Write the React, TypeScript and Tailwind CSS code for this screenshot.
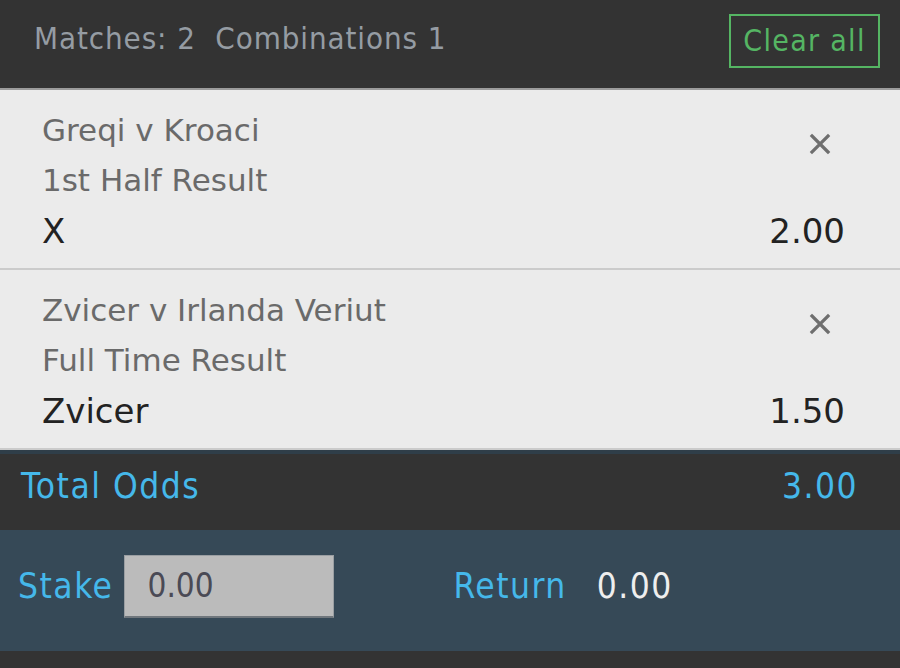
const picks = [
  { match: "Greqi v Kroaci", market: "1st Half Result", pick: "X", odds: "2.00" },
  { match: "Zvicer v Irlanda Veriut", market: "Full Time Result", pick: "Zvicer", odds: "1.50" },
];

function CloseIcon() {
  return (
    <svg className="absolute top-[43px] right-[69px] w-[22px] h-[22px]" viewBox="0 0 22 22" fill="none">
      <path d="M3 3L19 19M19 3L3 19" stroke="#6e6e6e" strokeWidth={3.2} strokeLinecap="square" />
    </svg>
  );
}

export default function App() {
  const narrow = "font-['DejaVu_Sans_Condensed','DejaVu_Sans',sans-serif]";
  return (
    <div className="w-[900px] h-[668px] flex flex-col bg-[#333333] font-['DejaVu_Sans',sans-serif] overflow-hidden">
      <div className="h-[90px] shrink-0 flex justify-between pl-[34px] pr-[20px] border-b-2 border-[#9c9c9c]">
        <span className={`${narrow} h-[77px] flex items-center text-[#959ca3] text-[31px] tracking-[0.9px]`}>
          Matches: 2&nbsp; Combinations 1
        </span>
        <button className={`${narrow} mt-[14px] h-[54px] w-[151px] border-2 border-[#55b563] text-[#55b563] text-[30px] tracking-[1.3px] leading-none`}>
          Clear all
        </button>
      </div>

      {picks.map((p) => (
        <div
          key={p.match}
          className="relative h-[180px] shrink-0 bg-[#ebebeb] border-b-2 border-[#cbcbcb] pl-[42px] pr-[55px] pt-[15px]"
        >
          <div className="text-[#6a6a6a] text-[31px] leading-[50px]">{p.match}</div>
          <div className="text-[#6a6a6a] text-[31px] leading-[50px]">{p.market}</div>
          <div className="flex justify-between text-[#222222] text-[34px] leading-[52px]">
            <span>{p.pick}</span>
            <span>{p.odds}</span>
          </div>
          <CloseIcon />
        </div>
      ))}

      <div
        className={`${narrow} h-[80px] shrink-0 border-t-4 border-[#2f3e49] flex items-center justify-between pl-[21px] pr-[42px] pb-[11px] text-[#45b8ea] text-[35px] tracking-[1.5px]`}
      >
        <span>Total Odds</span>
        <span>3.00</span>
      </div>

      <div
        className={`${narrow} h-[121px] shrink-0 bg-[#364957] flex items-center pl-[18px] pb-[9px] text-[35px] tracking-[1.5px]`}
      >
        <span className="text-[#45b8ea]">Stake</span>
        <div className="ml-[10px] w-[210px] h-[63px] bg-[#bbbbbb] border border-[#9a9ea2] border-b-2 border-b-[#6f767c] flex items-center pl-[23px] text-[#4a4a55] text-[33px] tracking-normal">
          0.00
        </div>
        <span className="ml-[120px] text-[#45b8ea]">Return</span>
        <span className="ml-[30px] text-[#eeeeee]">0.00</span>
      </div>
    </div>
  );
}
